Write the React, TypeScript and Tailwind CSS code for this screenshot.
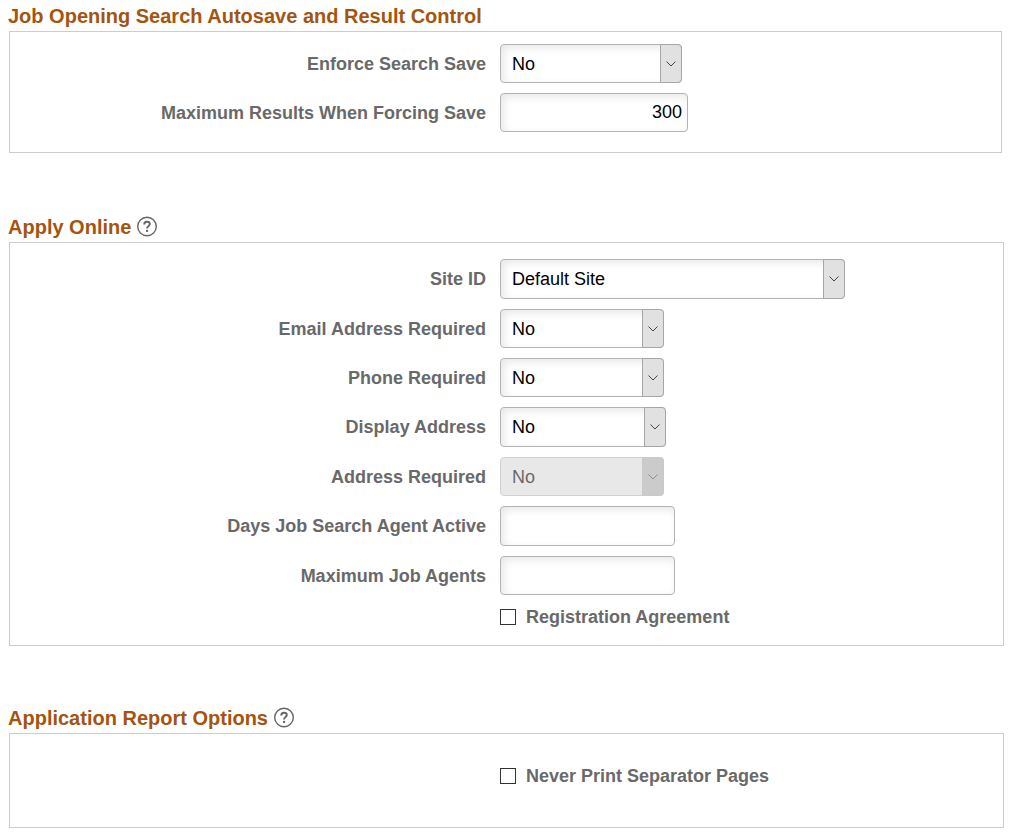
import React from "react";
import clsx from "clsx";

const controlStyle = "rounded border border-[#b3b3b3] text-lg text-black outline-none";
const enabledStyle = "bg-white shadow-[inset_3px_3px_8px_#e8e8e8]";

function HelpButton({ topic }: { topic: string }) {
  return (
    <button type="button" aria-label={`Help for ${topic}`} className="ml-1 size-6 cursor-pointer">
      <svg viewBox="0 0 24 24" fill="none" stroke="#666666" className="size-6">
        <circle cx="12" cy="11.5" r="9.3" strokeWidth="1.4" />
        <path d="M9.2 9.4C9.2 7.6 10.4 6.8 12 6.8c1.7 0 2.8.9 2.8 2.3 0 2-2.8 2.1-2.8 4.5" strokeWidth="1.9" />
        <path d="M11 14.9h2.1v2H11z" fill="#666666" stroke="none" />
      </svg>
    </button>
  );
}

interface SectionProps {
  title: string;
  help?: boolean;
  className?: string;
  panelClassName?: string;
  children: React.ReactNode;
}

function Section({ title, help, className, panelClassName, children }: SectionProps) {
  return (
    <section className={className}>
      <div className="flex h-[31px] items-center">
        <h2 className="text-xl font-bold text-[#a5540f]">{title}</h2>
        {help && <HelpButton topic={title} />}
      </div>
      <div className={clsx("ml-px flex flex-col gap-[10px] border border-[#cccccc]", panelClassName)}>
        {children}
      </div>
    </section>
  );
}

interface RowProps {
  id: string;
  label: string;
  children: React.ReactNode;
}

function Row({ id, label, children }: RowProps) {
  return (
    <div className="flex items-center gap-[14px]">
      <label htmlFor={id} className="w-[476px] text-right text-lg leading-6 font-bold text-[#696969]">
        {label}
      </label>
      {children}
    </div>
  );
}

interface SelectRowProps {
  id: string;
  label: string;
  options: string[];
  size: string;
  disabled?: boolean;
}

function SelectRow({ id, label, options, size, disabled }: SelectRowProps) {
  return (
    <Row id={id} label={label}>
      <div className={clsx("relative", size, disabled && "opacity-60")}>
        <select
          id={id}
          disabled={disabled}
          className={clsx(
            "size-full appearance-none pr-6 pl-[11px] disabled:opacity-100",
            controlStyle,
            disabled ? "bg-[#dadada]" : enabledStyle,
          )}
        >
          {options.map((option) => (
            <option key={option}>{option}</option>
          ))}
        </select>
        <span
          className={clsx(
            "pointer-events-none absolute inset-y-0 right-0 flex w-[22px] items-center justify-center rounded-r border border-[#a6a6a6]",
            disabled ? "bg-[#a9a9a9]" : "bg-[#e1e1e1]",
          )}
        >
          <svg viewBox="0 0 10 6" fill="none" stroke="#444444" className="h-[6px] w-[10px]">
            <path d="M.5 .5 5 5 9.5 .5" />
          </svg>
        </span>
      </div>
    </Row>
  );
}

interface TextRowProps {
  id: string;
  label: string;
  size: string;
  value?: string;
}

function TextRow({ id, label, size, value }: TextRowProps) {
  return (
    <Row id={id} label={label}>
      <input
        id={id}
        type="text"
        defaultValue={value}
        className={clsx("px-[5px] text-right", controlStyle, enabledStyle, size)}
      />
    </Row>
  );
}

function CheckRow({ id, label }: { id: string; label: string }) {
  return (
    <div className="flex items-center pl-[490px]">
      <input
        id={id}
        type="checkbox"
        className="size-4 appearance-none border border-[#333333] bg-white checked:bg-[#333333]"
      />
      <label htmlFor={id} className="pl-[10px] text-lg leading-6 font-bold text-[#696969]">
        {label}
      </label>
    </div>
  );
}

export default function App() {
  return (
    <main className="min-h-screen bg-white pr-[7px] pl-2 font-['Liberation_Sans',Arial,sans-serif]">
      <Section
        title="Job Opening Search Autosave and Result Control"
        panelClassName="mr-[2px] pt-3 pb-5"
      >
        <SelectRow
          id="enforce-save"
          label="Enforce Search Save"
          options={["No", "Yes"]}
          size="h-[39px] w-[182px]"
        />
        <TextRow
          id="max-results"
          label="Maximum Results When Forcing Save"
          value="300"
          size="h-[39px] w-[188px]"
        />
      </Section>

      <Section title="Apply Online" help className="mt-[58px]" panelClassName="pt-4 pb-4">
        <SelectRow id="site" label="Site ID" options={["Default Site"]} size="h-10 w-[345px]" />
        <SelectRow
          id="email-required"
          label="Email Address Required"
          options={["No", "Yes"]}
          size="h-[39px] w-[164px]"
        />
        <SelectRow
          id="phone-required"
          label="Phone Required"
          options={["No", "Yes"]}
          size="h-[39px] w-[164px]"
        />
        <SelectRow
          id="display-address"
          label="Display Address"
          options={["No", "Yes"]}
          size="h-10 w-[166px]"
        />
        <SelectRow
          id="address-required"
          label="Address Required"
          options={["No", "Yes"]}
          size="h-[39px] w-[164px]"
          disabled
        />
        <TextRow id="agent-days" label="Days Job Search Agent Active" size="h-10 w-[175px]" />
        <TextRow id="max-agents" label="Maximum Job Agents" size="h-[39px] w-[175px]" />
        <CheckRow id="registration" label="Registration Agreement" />
      </Section>

      <Section
        title="Application Report Options"
        help
        className="mt-14"
        panelClassName="pt-[30px] pb-[39px]"
      >
        <CheckRow id="separator-pages" label="Never Print Separator Pages" />
      </Section>
    </main>
  );
}
